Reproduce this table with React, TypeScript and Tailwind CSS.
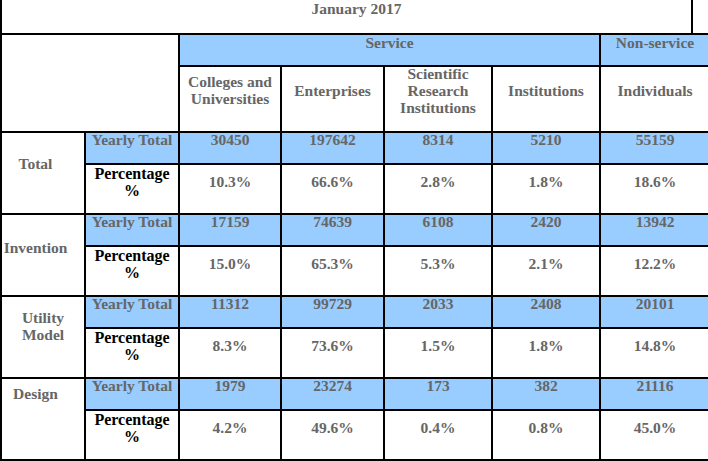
const SUB_HEADERS: string[][] = [
  ["Colleges and", "Universities"],
  ["Enterprises"],
  ["Scientific", "Research", "Institutions"],
  ["Institutions"],
  ["Individuals"],
];

interface Group {
  name: string[];
  pad: string;
  totals: string[];
  shares: string[];
}

const GROUPS: Group[] = [
  { name: ["Total"], pad: "pr-[15px] pb-[20px]", totals: ["30450", "197642", "8314", "5210", "55159"], shares: ["10.3%", "66.6%", "2.8%", "1.8%", "18.6%"] },
  { name: ["Invention"], pad: "pr-[15px] pb-[16px]", totals: ["17159", "74639", "6108", "2420", "13942"], shares: ["15.0%", "65.3%", "5.3%", "2.1%", "12.2%"] },
  { name: ["Utility", "Model"], pad: "pb-[22px]", totals: ["11312", "99729", "2033", "2408", "20101"], shares: ["8.3%", "73.6%", "1.5%", "1.8%", "14.8%"] },
  { name: ["Design"], pad: "pr-[15px] pb-[52px]", totals: ["1979", "23274", "173", "382", "21116"], shares: ["4.2%", "49.6%", "0.4%", "0.8%", "45.0%"] },
];

const cell = "flex flex-col items-center justify-center text-center border-r-2 border-b-2 border-black";
const blue = "bg-[#99ccff]";

function Lines({ lines }: { lines: string[] }) {
  return (
    <>
      {lines.map((line) => (
        <span key={line} className="block">
          {line}
        </span>
      ))}
    </>
  );
}

export default function App() {
  return (
    <div className="w-[708px] h-[461px] overflow-hidden bg-white">
      <div className="grid w-[711px] grid-cols-[86px_94px_102px_103px_108px_108px_110px] grid-rows-[35px_32px_66px_32px_50px_32px_50px_32px_50px_32px_50px] font-['Liberation_Serif',serif] font-bold text-[15.5px] leading-[17px] text-[#666666]">
        <div className="col-span-7 flex items-center justify-center pb-[17px] border-l-2 border-b-2 border-black bg-[linear-gradient(to_right,transparent_689px,#000_689px,#000_691px,transparent_691px)]">
          January 2017
        </div>

        <div className="col-span-2 row-span-2 border-l-2 border-r-2 border-b-2 border-black" />
        <div className={`col-span-4 pb-[16px] ${cell} ${blue}`}>Service</div>
        <div className={`pb-[16px] ${cell} ${blue}`}>Non-service</div>

        {SUB_HEADERS.map((lines) => (
          <div key={lines.join(" ")} className={`pb-[18px] ${cell}`}>
            <Lines lines={lines} />
          </div>
        ))}

        {GROUPS.map((group) => (
          <div key={group.name.join(" ")} className="contents">
            <div className={`row-span-2 border-l-2 ${group.pad} ${cell}`}>
              <Lines lines={group.name} />
            </div>
            <div className={`pb-[17px] ${cell} ${blue}`}>Yearly Total</div>
            {group.totals.map((value, i) => (
              <div key={`t${i}`} className={`pb-[17px] ${cell} ${blue}`}>
                {value}
              </div>
            ))}
            <div className={`pb-[15px] text-black text-[16px] ${cell}`}>
              <Lines lines={["Percentage", "%"]} />
            </div>
            {group.shares.map((value, i) => (
              <div key={`s${i}`} className={`pb-[16px] ${cell}`}>
                {value}
              </div>
            ))}
          </div>
        ))}
      </div>
    </div>
  );
}
